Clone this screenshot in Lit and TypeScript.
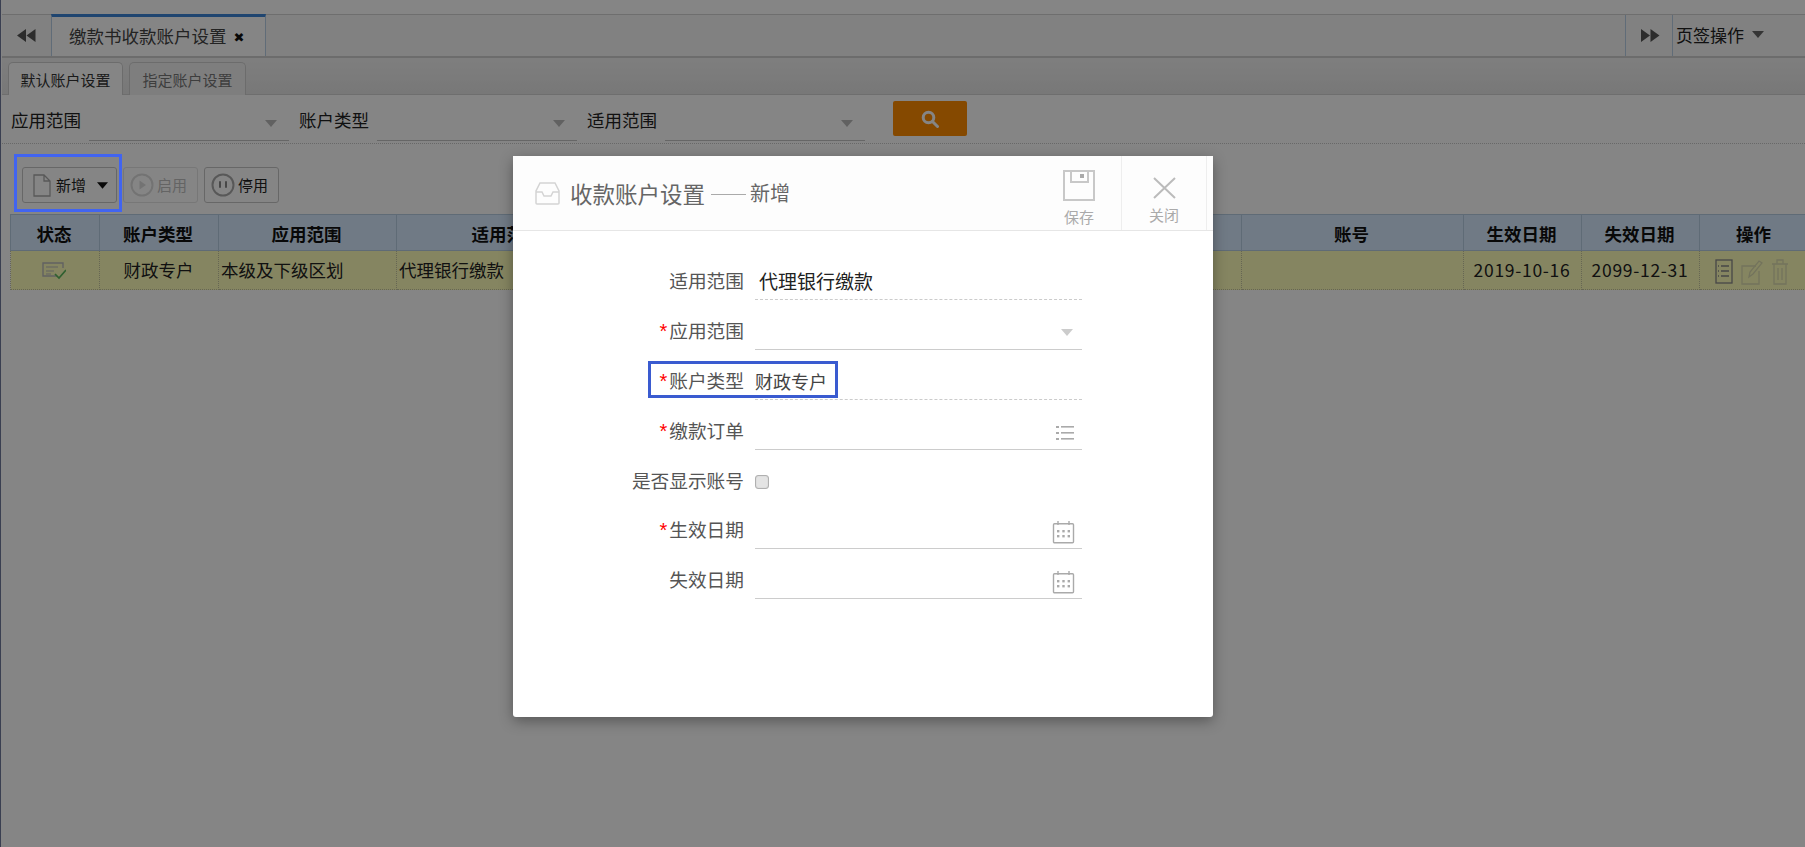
import { LitElement, html, css } from "lit";
import { customElement } from "lit/decorators.js";

const caret = html`<svg class="caret" width="12" height="7" viewBox="0 0 12 7"><path d="M0 0h12L6 7z" fill="currentColor"/></svg>`;

const calendar = html`<svg class="ficon" width="24" height="24" viewBox="0 0 24 24" fill="none" stroke="#aaa" stroke-width="1.4">
  <rect x="2.5" y="3.7" width="20" height="19" rx="1"/><path d="M7 1v4M18 1v4" />
  <g fill="#aaa" stroke="none"><rect x="6" y="10" width="2.4" height="2.4"/><rect x="11.3" y="10" width="2.4" height="2.4"/><rect x="16.6" y="10" width="2.4" height="2.4"/><rect x="6" y="15" width="2.4" height="2.4"/><rect x="11.3" y="15" width="2.4" height="2.4"/><rect x="16.6" y="15" width="2.4" height="2.4"/></g></svg>`;

const listIcon = html`<svg class="ficon" width="20" height="18" viewBox="0 0 20 18" fill="#aaa"><rect x="1" y="2" width="3" height="2"/><rect x="1" y="8" width="3" height="2"/><rect x="1" y="14" width="3" height="2"/><rect x="6" y="2" width="13" height="1.6"/><rect x="6" y="8" width="13" height="1.6"/><rect x="6" y="14" width="13" height="1.6"/></svg>`;

@customElement("app-root")
export class AppRoot extends LitElement {
  static styles = css`
    :host { display: block; position: relative; width: 1805px; height: 847px; overflow: hidden; background: #fff;
      font-family: "Noto Sans CJK SC", "Noto Sans", sans-serif; font-size: 17.5px; color: #222; }
    .page { height: 847px; border-left: 1px solid #707a9c; padding-left: 1px; box-sizing: border-box; display: flex; flex-direction: column; }
    .top { height: 14px; flex: none; border-bottom: 1px solid #d4d4d4; }
    .tabbar { height: 41px; flex: none; display: flex; align-items: stretch; background: #f7f7f7; border-bottom: 2px solid #cfcfcf; }
    .nav { width: 49px; display: flex; align-items: center; justify-content: center; box-sizing: border-box; }
    .tab { width: 215px; box-sizing: border-box; background: #fff; border: 1px solid #b9cfe6; border-width: 0 1px; border-top: 3px solid #3d84d6; margin-top: -1px;
      display: flex; align-items: center; padding: 0 0 2px 17px; gap: 7px; color: #444; line-height: 1; }
    .tab b { font-size: 13px; color: #111; font-family: "DejaVu Sans", sans-serif; padding-top: 3px; }
    .grow { flex: 1; }
    .nav2 { width: 48px; border-left: 1px solid #b9cfe6; border-right: 1px solid #b9cfe6; display: flex; align-items: center; justify-content: center; padding-left: 3px; box-sizing: border-box; }
    .ops { width: 132px; padding: 0 0 2px 3px; display: flex; align-items: center; gap: 8px; font-size: 17px; color: #222; box-sizing: border-box; line-height: 1; }
    .ops .caret { color: #666; }
    .subbar { height: 37px; flex: none; display: flex; gap: 6px; padding-left: 6px; align-items: flex-end; background: linear-gradient(#f2f2f2, #e6e6e6); border-bottom: 1px solid #d4d4d4; box-sizing: border-box; }
    .stab { height: 33px; margin-bottom: -1px; width: 117px; box-sizing: border-box; border: 1px solid #d0d0d0; border-bottom: none; border-radius: 5px 5px 0 0; font-size: 15px; display: flex; align-items: center; justify-content: center; color: #777; background: #f2f2f2; line-height: 1; }
    .stab.on { background: #fff; color: #333; width: 115px; }
    .search { height: 49px; flex: none; box-sizing: border-box; border-bottom: 1px dotted #c8c8c8; display: flex; align-items: stretch; padding-left: 9px; }
    .sgroup { width: 288px; flex: none; display: flex; align-items: center; }
    .sgroup label { width: 78px; line-height: 1; flex: none; padding-top: 2px; }
    .sfield { width: 200px; flex: none; height: 34px; margin-top: 10px; border-bottom: 1px solid #c4c4c4; display: flex; align-items: center; justify-content: flex-end; padding-right: 12px; box-sizing: border-box; color: #bbb; }
    .sbtn { width: 74px; height: 35px; margin: 6px 0 0 18px; background: #ff8d00; border-radius: 2px; display: flex; align-items: center; justify-content: center; }
    .toolbar { height: 70px; flex: none; box-sizing: border-box; padding: 23px 0 0 20px; display: flex; gap: 6px; align-items: flex-start; }
    .btn { height: 36px; box-sizing: border-box; border: 1px solid #c6c6c6; border-radius: 3px; display: flex; align-items: center; font-size: 15px; line-height: 1; color: #222; }
    .btn span { padding-bottom: 2px; }
    .b1 { width: 95px; padding-left: 10px; gap: 5px; }
    .b1 .caret { margin-left: 6px; color: #111; width: 11px; }
    .b2 { width: 75px; padding-left: 6px; gap: 3px; }
    .dim { color: #c0c0c0; border-color: #e4e4e4; }
    table { border-collapse: collapse; table-layout: fixed; margin-left: 8px; width: 1800px; flex: none; }
    th { height: 36px; box-sizing: border-box; background: #d6eaff; border: 1px solid #b7cde2; font-size: 17.5px; line-height: 1; padding: 2px 2px 0 0; color: #111; font-weight: 700; }
    td { height: 39px; box-sizing: border-box; background: #ffffbb; border: 1px dotted #c4c4a0; text-align: center; padding: 0 1px 0 0; line-height: 1; color: #222; white-space: nowrap; }
    td.l { text-align: left; padding-left: 2px; }
    td.d { letter-spacing: .7px; }
    td.s { padding-right: 3px; }
    .opsc { display: flex; justify-content: center; gap: 8px; align-items: center; padding-top: 3px; padding-right: 5px; }
    .overlay { position: absolute; inset: 0; background: rgba(0, 0, 0, 0.48); }
    .mark { position: absolute; box-sizing: border-box; border: 3px solid #4164f0; }
    .m1 { left: 14px; top: 154px; width: 108px; height: 58px; }
    .dialog { position: absolute; left: 513px; top: 156px; width: 700px; height: 561px; background: #fff; border-radius: 3px; box-shadow: 0 4px 14px rgba(0,0,0,.35); }
    .dhead { height: 75px; box-sizing: border-box; background: #fdfdfd; border-bottom: 1px solid #e6e6e6; display: flex; align-items: stretch; }
    .title { flex: 1; display: flex; align-items: center; padding-left: 22px; color: #666; line-height: 1; box-sizing: border-box; }
    .title .t1 { font-size: 22.5px; margin-left: 10px; }
    .title .line { width: 35px; height: 1px; background: #aaa; margin: 2px 4px 0 6px; }
    .title .t2 { font-size: 20px; }
    .act { display: flex; flex-direction: column; align-items: center; font-size: 15px; color: #aaa; line-height: 1; box-sizing: border-box; }
    .save { width: 87px; border-right: 1px solid #eee; padding: 14px 0 0 2px; gap: 8px; }
    .close { width: 85px; border-right: 1px solid #eee; padding: 21px 0 0 0; gap: 8px; margin-right: 6px; }
    .form { position: relative; padding-top: 19px; display: flex; flex-direction: column; }
    .row { height: 50px; display: flex; align-items: stretch; flex: none; }
    .row.short { height: 49px; }
    .lab { width: 231px; flex: none; box-sizing: border-box; text-align: right; color: #555; font-size: 18.7px; line-height: 1; padding-top: 21px; margin-right: 11px; }
    .lab i { color: #f00; font-style: normal; font-family: "Liberation Sans", sans-serif; font-size: 20px; margin-right: 2px; }
    .val { width: 327px; flex: none; box-sizing: border-box; border-bottom: 1px solid #ccc; display: flex; justify-content: space-between; align-items: center; padding-top: 12px; font-size: 18px; line-height: 1; color: #444; }
    .val.ro { border-bottom: 1px dashed #ccc; }
    .val.ind { padding-left: 4px; font-size: 19px; color: #222; }
    .val .caret { color: #ccc; margin: 4px 9px 0 0; }
    .ficon { margin: 4px 7px 0 0; }
    .plain { display: flex; align-items: center; padding-top: 14px; }
    .check { width: 14px; height: 14px; box-sizing: border-box; border: 1px solid #b0b0b0; border-radius: 3px; background: #e4e4e4; box-shadow: inset 0 0 1px #aaa; }
    .m2 { left: 135px; top: 130px; width: 190px; height: 37px; border-color: #3a5bd0; }
  `;

  render() {
    return html`
      <div class="page">
        <div class="top"></div>
        <div class="tabbar">
          <div class="nav"><svg width="19" height="13" viewBox="0 0 19 13"><path d="M9 0v13L0 6.500zM18.500 0v13L9.500 6.500z" fill="#555"/></svg></div>
          <div class="tab"><span>缴款书收款账户设置</span><b>✖</b></div>
          <div class="grow"></div>
          <div class="nav2"><svg width="19" height="13" viewBox="0 0 19 13"><path d="M0 0v13L9 6.500zM9.500 0v13L18.500 6.500z" fill="#555"/></svg></div>
          <div class="ops"><span>页签操作</span>${caret}</div>
        </div>
        <div class="subbar">
          <div class="stab on">默认账户设置</div>
          <div class="stab">指定账户设置</div>
        </div>
        <div class="search">
          ${["应用范围", "账户类型", "适用范围"].map((t) => html`
            <div class="sgroup"><label>${t}</label><div class="sfield">${caret}</div></div>`)}
          <div class="sbtn"><svg width="18" height="18" viewBox="0 0 18 18" fill="none" stroke="#fff" stroke-width="3"><circle cx="7.500" cy="7.500" r="5.300"/><path d="M11.500 11.500l5 5" stroke-linecap="round"/></svg></div>
        </div>
        <div class="toolbar">
          <div class="btn b1">
            <svg width="18" height="23" viewBox="0 0 18 23" fill="none" stroke="#aaa" stroke-width="1.300"><path d="M1 1h10l6 6v15H1zM11 1v6h6"/></svg>
            <span>新增</span>${caret}
          </div>
          <div class="btn b2 dim">
            <svg width="24" height="24" viewBox="0 0 24 24" fill="none" stroke="#ddd" stroke-width="2"><circle cx="12" cy="12" r="10.500"/><path d="M9.500 7.500v9l6.500-4.500z" fill="#ddd" stroke="none"/></svg>
            <span>启用</span>
          </div>
          <div class="btn b2">
            <svg width="24" height="24" viewBox="0 0 24 24" fill="none" stroke="#aaa" stroke-width="2"><circle cx="12" cy="12" r="10.500"/><path d="M9 9v5M15 9v5" stroke="#888" stroke-linecap="round"/></svg>
            <span>停用</span>
          </div>
        </div>
        <table>
          <colgroup>
            <col style="width:89px"/><col style="width:119px"/><col style="width:178px"/><col style="width:222px"/>
            <col style="width:311px"/><col style="width:312px"/><col style="width:222px"/><col style="width:118px"/><col style="width:118px"/><col/>
          </colgroup>
          <tr><th>状态</th><th>账户类型</th><th>应用范围</th><th>适用范围</th><th></th><th></th><th>账号</th><th>生效日期</th><th>失效日期</th><th>操作</th></tr>
          <tr>
            <td class="s">
              <svg width="24" height="18" viewBox="0 0 24 18" fill="none" style="vertical-align:middle">
                <path d="M15 14H1V1h20v5" stroke="#bbb" stroke-width="1.400"/><path d="M4 5h12M4 9h8M4 12h5" stroke="#bbb" stroke-width="1.200"/>
                <path d="M13 12l4 4 7-8" stroke="#5cb85c" stroke-width="1.700"/>
              </svg>
            </td>
            <td>财政专户</td><td class="l">本级及下级区划</td><td class="l">代理银行缴款</td><td></td><td></td><td></td>
            <td class="d">2019-10-16</td><td class="d">2099-12-31</td>
            <td>
              <div class="opsc">
                <svg width="18" height="25" viewBox="0 0 18 25" fill="none" stroke="#888" stroke-width="1.300"><rect x="1" y="1" width="16" height="23"/><path d="M6 7h8M6 12h8M6 17h8M3 7h1M3 12h1M3 17h1"/></svg>
                <svg width="22" height="26" viewBox="0 0 22 26" fill="none" stroke="#ddddb0" stroke-width="1.300"><path d="M15 7H1v18h17V12"/><path d="M8 18l1-5 9-11 3 2-9 11z"/></svg>
                <svg width="18" height="26" viewBox="0 0 18 26" fill="none" stroke="#ddddb0" stroke-width="1.300"><path d="M1 5h16M6 5V1h6v4M3 5v20h12V5M7 9v12M11 9v12"/></svg>
              </div>
            </td>
          </tr>
        </table>
      </div>
      <div class="overlay"></div>
      <div class="mark m1"></div>
      <div class="dialog">
        <div class="dhead">
          <div class="title">
            <svg width="25" height="23" viewBox="0 0 25 23" fill="none" stroke="#d4d4d4" stroke-width="1.500"><path d="M5 1h15l4 8v12a1 1 0 0 1-1 1H2a1 1 0 0 1-1-1V9z"/><path d="M1 10h6l2 4h7l2-4h6"/></svg>
            <span class="t1">收款账户设置</span><span class="line"></span><span class="t2">新增</span>
          </div>
          <div class="act save">
            <svg width="32" height="31" viewBox="0 0 32 31" fill="none" stroke="#c8c8c8" stroke-width="2"><path d="M1 0v30h30V1H1"/><path d="M8 1v11h17V1"/><rect x="17" y="4" width="4" height="4" fill="#aaa" stroke="none"/></svg>
            <span>保存</span>
          </div>
          <div class="act close">
            <svg width="23" height="22" viewBox="0 0 23 22" fill="none" stroke="#bbb" stroke-width="2"><path d="M1 1l21 20M22 1L1 21"/></svg>
            <span>关闭</span>
          </div>
        </div>
        <div class="form">
          <div class="row"><div class="lab">适用范围</div><div class="val ro ind">代理银行缴款</div></div>
          <div class="row"><div class="lab"><i>*</i>应用范围</div><div class="val"><span></span>${caret}</div></div>
          <div class="row"><div class="lab"><i>*</i>账户类型</div><div class="val ro">财政专户</div></div>
          <div class="row"><div class="lab"><i>*</i>缴款订单</div><div class="val"><span></span>${listIcon}</div></div>
          <div class="row short"><div class="lab">是否显示账号</div><div class="plain"><div class="check"></div></div></div>
          <div class="row"><div class="lab"><i>*</i>生效日期</div><div class="val"><span></span>${calendar}</div></div>
          <div class="row"><div class="lab">失效日期</div><div class="val"><span></span>${calendar}</div></div>
          <div class="mark m2"></div>
        </div>
      </div>
    `;
  }
}
